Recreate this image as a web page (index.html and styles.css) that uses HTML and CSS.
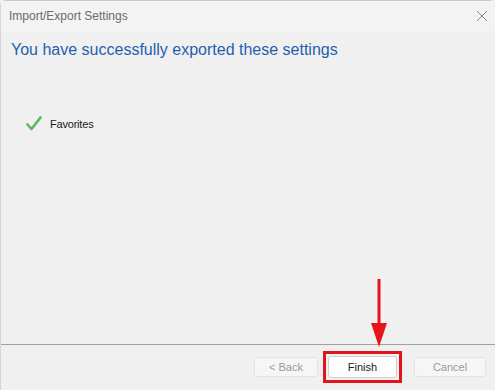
FILE: index.html
```html
<!DOCTYPE html>
<html>

	<head>
		<meta charset="UTF-8">
		<title>Import/Export Settings</title>
		<link rel="stylesheet" href="styles.css">
	</head>

	<body>
		<div class="win">
			<div class="titlebar">
				<span class="title">Import/Export Settings</span>
				<span class="close">
					<svg width="12" height="12" viewBox="0 0 12 12"><path d="M1 1L11 11M11 1L1 11" stroke="#8a8a8a" stroke-width="1"/></svg>
				</span>
			</div>
			<h2 class="heading">You have successfully exported these settings</h2>
			<div class="main">
				<div class="item">
					<svg class="check" width="16" height="15" viewBox="0 0 16 15">
						<path d="M1.5 8.5L5.5 13L14.5 1.5" fill="none" stroke="#5cb85c" stroke-width="2.6" stroke-linecap="round" stroke-linejoin="round"/>
					</svg>
					<span>Favorites</span>
				</div>
			</div>
			<div class="footer">
				<button class="btn" disabled>&lt; Back</button>
				<div class="mark">
					<button class="btn active">Finish</button>
				</div>
				<button class="btn" disabled>Cancel</button>
			</div>
		</div>
		<!--红色箭头-->
		<svg class="arrow" width="20" height="70" viewBox="0 0 20 70">
			<path d="M10 0V48" stroke="#e8141b" stroke-width="3"/>
			<path d="M2 44L18 44L10 68Z" fill="#e8141b"/>
		</svg>
	</body>

</html>
```

FILE: styles.css
```css
* {
	margin: 0;
	padding: 0;
	box-sizing: border-box;
}

body {
	width: 495px;
	height: 390px;
	background: #f0f0f0;
	font-family: "Liberation Sans", Arial, sans-serif;
	overflow: hidden;
	position: relative;
}

.win {
	height: 390px;
	display: flex;
	flex-direction: column;
	border-top: 1px solid #c9c9c9;
	border-left: 1px solid #d6d6d6;
	border-radius: 6px 6px 0 0;
}

.titlebar {
	height: 30px;
	background: #f3f3f3;
	display: flex;
	align-items: center;
	justify-content: space-between;
	padding: 0 7px 0 8px;
}

.title {
	font-size: 12px;
	color: #6b6b6b;
}

.close {
	display: flex;
}

.heading {
	font-weight: normal;
	font-size: 16px;
	color: #1f5fae;
	padding: 10px 0 0 10px;
	height: 60px;
}

.main {
	flex: 1;
	padding: 25px 0 0 25px;
}

.item {
	display: flex;
	align-items: center;
	gap: 8px;
	font-size: 11px;
	letter-spacing: -0.2px;
	color: #1a1a1a;
}

.footer {
	height: 46px;
	border-top: 1px solid #a0a0a0;
	display: flex;
	align-items: center;
	justify-content: flex-end;
	padding: 0 9px 2px 0;
}

.btn {
	width: 64px;
	height: 20px;
	border: 1px solid #e3e3e3;
	border-radius: 3px;
	background: #f6f6f6;
	font-family: inherit;
	font-size: 11px;
	color: #9a9a9a;
}

.mark {
	border: 3px solid #e0141c;
	padding: 2px;
	margin: 0 12px 0 5px;
}

.mark .btn {
	width: 69px;
	height: 22px;
	background: #fdfdfd;
	border-color: #d0d0d0;
	color: #1a1a1a;
}

.footer > .btn:last-child {
	width: 72px;
}

.arrow {
	position: absolute;
	left: 369px;
	top: 279px;
}
```
